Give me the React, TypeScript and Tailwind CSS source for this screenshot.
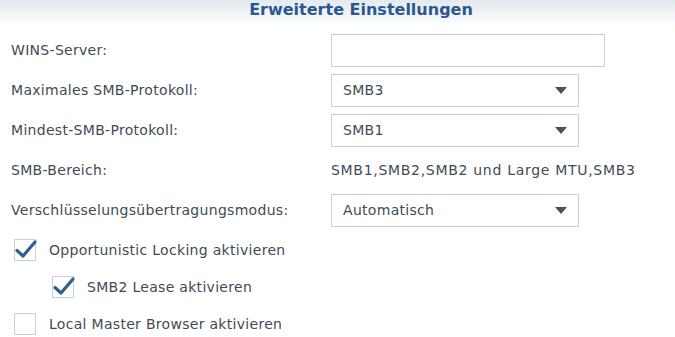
const font = { fontFamily: '"DejaVu Sans", Verdana, sans-serif', letterSpacing: '0.3px' };

function Arrow() {
  return (
    <svg width="12" height="7" viewBox="0 0 12 7" className="shrink-0" aria-hidden>
      <path d="M0 0h12L6 7z" fill="#48505a" />
    </svg>
  );
}

function Select({ value }: { value: string }) {
  return (
    <div className="flex h-[33px] w-[248px] items-center justify-between border border-[#c6d1dd] bg-white pl-[11px] pr-[11px] text-[14px] text-[#414b55]">
      <span>{value}</span>
      <Arrow />
    </div>
  );
}

function Check({ checked }: { checked: boolean }) {
  return (
    <span className="relative block h-[22px] w-[22px] shrink-0 border border-[#c6d1dd] bg-white">
      {checked && (
        <svg
          width="24"
          height="20"
          viewBox="0 0 24 20"
          className="absolute left-[-1px] top-[-1px]"
          aria-hidden
        >
          <path
            d="M3 11.5 L9 17 L21 3"
            fill="none"
            stroke="#2e5f94"
            strokeWidth={3.2}
            strokeLinecap="round"
            strokeLinejoin="round"
          />
        </svg>
      )}
    </span>
  );
}

function Row({ label, children }: { label: string; children: React.ReactNode }) {
  return (
    <div className="flex h-[33px] items-center">
      <div className="w-[331px] shrink-0 pl-[11px]">{label}</div>
      {children}
    </div>
  );
}

export default function App() {
  return (
    <div className="h-[337px] w-[675px] overflow-hidden bg-white text-[14px] text-[#414b55]" style={font}>
      <div className="flex h-[27px] justify-center bg-gradient-to-b from-[#e3e9ef] to-white pl-[47px] pt-[0px]">
        <span className="text-[16px] leading-[20px] font-bold tracking-normal text-[#2b5791]">
          Erweiterte Einstellungen
        </span>
      </div>
      <div className="flex flex-col gap-[7px] pt-[7px]">
        <Row label="WINS-Server:">
          <div className="h-[33px] w-[274px] border border-[#c6d1dd] bg-white" />
        </Row>
        <Row label="Maximales SMB-Protokoll:">
          <Select value="SMB3" />
        </Row>
        <Row label="Mindest-SMB-Protokoll:">
          <Select value="SMB1" />
        </Row>
        <Row label="SMB-Bereich:">
          <span className="tracking-[0.7px]">SMB1,SMB2,SMB2 und Large MTU,SMB3</span>
        </Row>
        <Row label="Verschlüsselungsübertragungsmodus:">
          <Select value="Automatisch" />
        </Row>
      </div>
      <div className="flex flex-col gap-[15px] pl-[14px] pt-[12px]">
        <label className="flex items-center gap-[13px]">
          <Check checked />
          <span>Opportunistic Locking aktivieren</span>
        </label>
        <label className="flex items-center gap-[13px] pl-[38px]">
          <Check checked />
          <span>SMB2 Lease aktivieren</span>
        </label>
        <label className="flex items-center gap-[13px]">
          <Check checked={false} />
          <span>Local Master Browser aktivieren</span>
        </label>
      </div>
    </div>
  );
}
